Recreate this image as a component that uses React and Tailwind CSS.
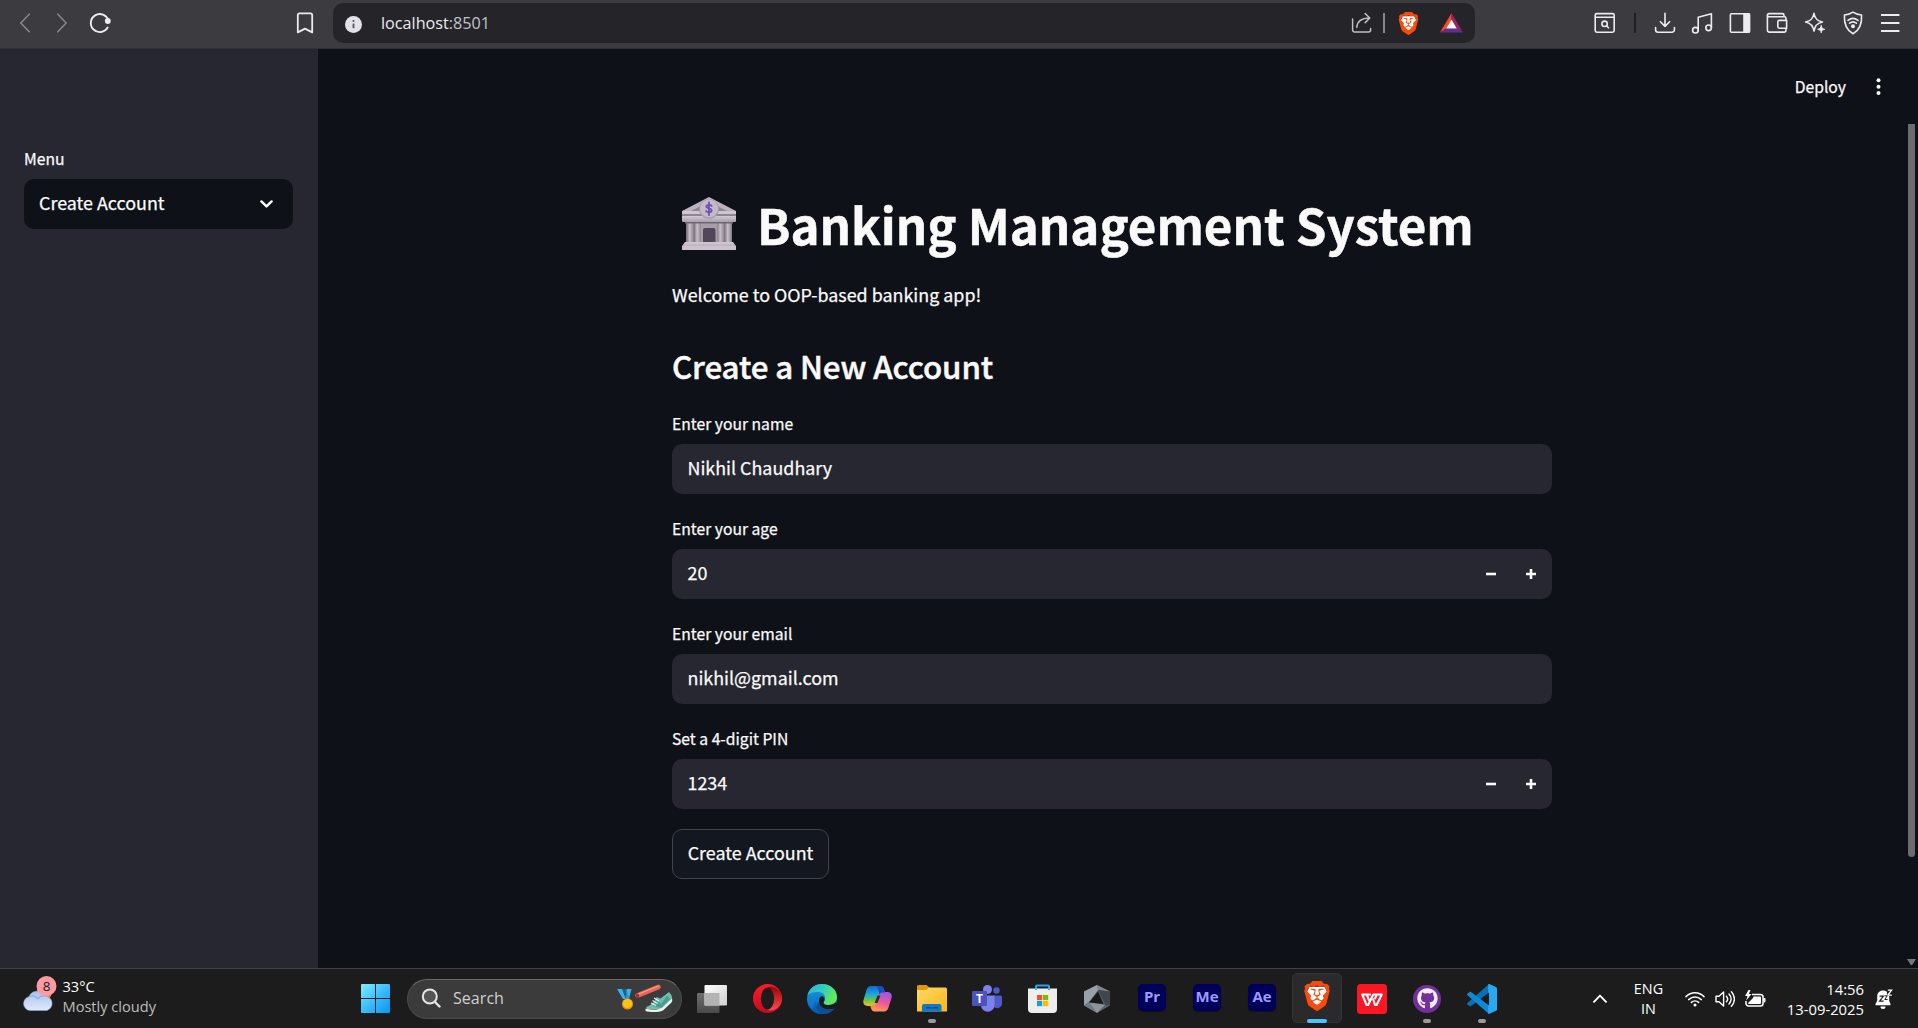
import React from "react";
import { SiBrave } from "react-icons/si";
import { FaGithub } from "react-icons/fa";

/* ---------- browser toolbar icons ---------- */

function Line({ size = 22, className = "", children, sw = 1.6 }) {
  return (
    <svg
      width={size}
      height={size}
      viewBox={`0 0 ${size} ${size}`}
      fill="none"
      stroke="currentColor"
      strokeWidth={sw}
      strokeLinecap="round"
      strokeLinejoin="round"
      className={`shrink-0 ${className}`}
    >
      {children}
    </svg>
  );
}

const Back = () => (
  <Line><path d="M15.2 2.2 6.8 11l8.4 8.8" /></Line>
);
const Forward = () => (
  <Line><path d="M6.8 2.2 15.2 11l-8.4 8.8" /></Line>
);
const Reload = () => (
  <Line sw={1.9}>
    <path d="M19.4 8.4A9 9 0 1 0 18.6 15.6" />
    <circle cx="18.8" cy="9" r="2" fill="currentColor" />
  </Line>
);
const Bookmark = () => (
  <Line sw={1.8}><path d="M3.8 20.4V3.2a1.8 1.8 0 0 1 1.8-1.8h10.8a1.8 1.8 0 0 1 1.8 1.8v17.2L11 16.6z" /></Line>
);
const Share = () => (
  <Line sw={1.5} className="text-[#bdbdc2]">
    <path d="M1.6 7v11a2 2 0 0 0 2 2h14a2 2 0 0 0 2-2v-1.4" />
    <path d="M5.8 15.4C6.2 9.6 9.6 6 18.6 6M14.2 1.6 18.8 6l-4.6 4.6" />
  </Line>
);
const Find = () => (
  <Line>
    <rect x="1.2" y="1.6" width="19" height="18.6" rx="1.6" />
    <path d="M1.4 5.2h18.6" />
    <circle cx="10.6" cy="11.8" r="2.7" />
    <path d="m12.6 13.8 1.8 2" />
  </Line>
);
const Download = () => (
  <Line>
    <path d="M11 1.4v12.8M6.4 9.8l4.6 4.6 4.6-4.6" />
    <path d="M1.6 15.6v2.2a2.4 2.4 0 0 0 2.4 2.4h14a2.4 2.4 0 0 0 2.4-2.4v-2.2" />
  </Line>
);
const Music = () => (
  <Line>
    <path d="M7.2 18.4V5.2L20.4 1.8v14" />
    <circle cx="4.4" cy="18.2" r="2.8" />
    <circle cx="17.6" cy="15.8" r="2.8" />
  </Line>
);
const Panel = () => (
  <Line>
    <rect x="1.4" y="1.8" width="19" height="18.4" rx="1" />
    <path d="M15 2h5.4v18H15z" fill="currentColor" />
  </Line>
);
const Wallet = () => (
  <Line>
    <path d="M20 8.2V6.4a1.6 1.6 0 0 0-1.6-1.6H3A1.6 1.6 0 0 1 1.4 3.2M1.4 3.2v14.9a2 2 0 0 0 2 2h15a1.6 1.6 0 0 0 1.6-1.6v-1.9M1.4 3.2a1.6 1.6 0 0 1 1.6-1.6h13.4a1.6 1.6 0 0 1 1.6 1.6v1.6" />
    <path d="M20.6 8.4h-7.2a1.6 1.6 0 0 0-1.6 1.6v4.6a1.6 1.6 0 0 0 1.6 1.6h7.2z" />
  </Line>
);
const Sparkle = () => (
  <Line>
    <path d="M10 1.4c.9 5.2 3 7.4 8.4 8.6-5.4 1.2-7.5 3.6-8.4 9-.9-5.4-3-7.8-8.4-9C7 8.8 9.1 6.6 10 1.4z" />
    <path d="M12.8 13h8v8h-8z" fill="#3c3b3f" stroke="none" />
    <path d="M17.2 13.600c.5 2.400 1.200 3.200 3.600 3.700-2.400.5-3.100 1.200-3.600 3.600-.5-2.400-1.200-3.100-3.600-3.600 2.400-.5 3.100-1.300 3.600-3.700z" fill="currentColor" strokeWidth="0.800" />
  </Line>
);
const Vpn = () => (
  <Line size={24}>
    <path d="M12 1.2c2.800 2 5.400 2.600 8.600 2.800.4 8.400-1.200 14.800-8.600 18.800C4.600 18.800 3 12.400 3.400 4c3.200-.2 5.800-.8 8.600-2.800z" />
    <path d="M7 9.400c3-2.400 7-2.400 10 0M8.600 12.200c2-1.600 4.800-1.600 6.800 0" />
    <circle cx="12" cy="15.2" r="1.200" fill="currentColor" />
  </Line>
);
const Burger = () => (
  <Line sw={1.9}><path d="M2 3h18.400M2 11h18.400M2 19h18.400" strokeLinecap="butt" /></Line>
);

function BraveLogo({ size, className = "" }) {
  return (
    <span className={`relative inline-flex shrink-0 ${className}`}>
      <svg width={size} height={size} viewBox="0 0 24 24" className="absolute inset-0">
        <path d="M6 4.500h12l2 4-2 7.500-6 5-6-5-2-7.500z" fill="#fff" />
      </svg>
      <SiBrave size={size} color="#fb4a0b" className="relative" />
    </span>
  );
}

const Bat = () => (
  <svg width="23" height="20" viewBox="0 0 23 20" className="ml-5 shrink-0">
    <path d="M11.500 0v7L6.500 15.500 0 19.500z" fill="#ff4724" />
    <path d="M11.500 0v7l5 8.500 6.500 4z" fill="#9e1f63" />
    <path d="M0 19.500l6.500-4h10l6.500 4z" fill="#662d91" />
    <path d="M11.500 6.600l5.300 9H6.200z" fill="#fff" />
  </svg>
);

function Cell({ children }) {
  return <div className="flex w-[37.6px] shrink-0 items-center justify-center">{children}</div>;
}

function Toolbar() {
  return (
    <header className="flex h-[49px] shrink-0 border-b border-[#313135] bg-[#3c3b3f] pt-[3px] text-[#ececf0]">
      <div className="flex h-10 w-[333px] shrink-0 items-center pl-1.5">
        <div className="flex text-[#87868b]">
          <Cell><Back /></Cell>
          <Cell><Forward /></Cell>
        </div>
        <Cell><Reload /></Cell>
        <div className="mr-[17.5px] ml-auto"><Bookmark /></div>
      </div>
      <div className="flex h-10 w-[1142px] shrink-0 items-center rounded-[10px] bg-[#252429] pr-[12.5px] pl-3">
        <svg width="17" height="17" viewBox="0 0 17 17" className="mt-0.5">
          <circle cx="8.5" cy="8.5" r="8.5" fill="#e3e2e8" />
          <path d="M8.500 7.600v4.600" stroke="#55545a" strokeWidth="1.8" />
          <circle cx="8.5" cy="5" r="1.1" fill="#55545a" />
        </svg>
        <div className="ml-[19px] font-['Open_Sans',sans-serif] text-[16.2px] leading-10 text-[#ebebef]">
          localhost<span className="text-[#c3c3c8]">:8501</span>
        </div>
        <div className="ml-auto flex items-center">
          <Share />
          <div className="ml-2.5 h-5 w-[1.5px] bg-[#88878c]" />
          <BraveLogo size={23} className="ml-3" />
          <Bat />
        </div>
      </div>
      <div className="flex h-10 flex-1 items-center justify-end pr-[9px]">
        <Find />
        <div className="mr-2.5 ml-[18px] h-5 w-0.5 bg-[#1f1e22]" />
        <Cell><Download /></Cell>
        <Cell><Music /></Cell>
        <Cell><Panel /></Cell>
        <Cell><Wallet /></Cell>
        <Cell><Sparkle /></Cell>
        <Cell><Vpn /></Cell>
        <Cell><Burger /></Cell>
      </div>
    </header>
  );
}

/* ---------- app ---------- */

function Sidebar() {
  return (
    <aside className="w-[318px] shrink-0 bg-[#262730] px-6 pt-[97px]">
      <div className="text-[15.7px] leading-[26px]">Menu</div>
      <div className="mt-[7px] flex h-[50px] w-[269px] items-center justify-between rounded-[10px] bg-[#0e1117] pr-5 pl-[15px]">
        <span className="pb-1 text-[17.9px]">Create Account</span>
        <svg width="13" height="8" viewBox="0 0 13 8" fill="none" stroke="#fafafa" strokeWidth="2.4" strokeLinecap="round" strokeLinejoin="round">
          <path d="M1.400 1.400l5.100 5 5.100-5" />
        </svg>
      </div>
    </aside>
  );
}

function BankIcon() {
  return (
    <svg width="54" height="54" viewBox="0 0 54 54" className="mr-[21px] ml-2.5 shrink-0">
      <defs>
        <linearGradient id="col" x1="0" x2="1">
          <stop offset="0" stopColor="#857d88" />
          <stop offset=".4" stopColor="#c9bfcb" />
          <stop offset="1" stopColor="#8f8793" />
        </linearGradient>
        <linearGradient id="slab" x1="0" x2="0" y1="0" y2="1">
          <stop offset="0" stopColor="#d3cad6" />
          <stop offset="1" stopColor="#a89eac" />
        </linearGradient>
      </defs>
      <rect x="4" y="25" width="46" height="20" fill="#7e7681" />
      <rect x="14" y="25" width="26" height="20" fill="#a79eaa" />
      <rect x="5" y="25" width="6.5" height="20" fill="url(#col)" />
      <rect x="12.5" y="25" width="6.5" height="20" fill="url(#col)" />
      <rect x="35.5" y="25" width="6.5" height="20" fill="url(#col)" />
      <rect x="43" y="25" width="6.5" height="20" fill="url(#col)" />
      <path d="M21 45V33a2 2 0 0 1 2-2h8.500a2 2 0 0 1 2 2v12z" fill="#51475b" />
      <path d="M27 0 54 14v8H0v-8z" fill="#bdb3c0" />
      <path d="M27 5 45 14H9z" fill="#8d8492" />
      <rect y="14" width="54" height="3" fill="#cfc6d2" />
      <rect y="17" width="54" height="2" fill="#8e8593" />
      <rect y="19" width="54" height="6" rx="1" fill="url(#slab)" />
      <rect x="3" y="25" width="48" height="1.5" fill="#6f6773" />
      <path d="M3 45h48l3 4v4H0v-4z" fill="url(#slab)" />
      <rect y="49" width="54" height="4" rx="1" fill="#cbc2ce" />
      <circle cx="27" cy="12" r="10" fill="#a79dac" />
      <circle cx="27" cy="11.5" r="9" fill="#c4bac9" />
      <path d="M29.600 8.800c-.6-1.200-5.200-1.500-5.200.7 0 2.500 5.200 1.300 5.200 3.900 0 2.300-4.700 2.100-5.400.7M27 5.500v12.500" fill="none" stroke="#7350b8" strokeWidth="1.9" strokeLinecap="round" />
    </svg>
  );
}

function Field({ label, value, stepper, first }) {
  return (
    <div className={first ? "mt-6" : "mt-[22px]"}>
      <div className="text-[15.7px] leading-[26px]">{label}</div>
      <div className="mt-[7px] flex h-[50px] items-center justify-between rounded-[10px] bg-[#262730] pr-4 pl-[15.5px]">
        <span className="pb-1 text-[17.9px]">{value}</span>
        {stepper && (
          <span className="flex gap-[30px]">
            <svg width="10" height="10" viewBox="0 0 10 10"><path d="M0 5h10" stroke="#fafafa" strokeWidth="2.6" /></svg>
            <svg width="10" height="10" viewBox="0 0 10 10"><path d="M0 5h10M5 0v10" stroke="#fafafa" strokeWidth="2.6" /></svg>
          </span>
        )}
      </div>
    </div>
  );
}

function Main() {
  return (
    <main className="relative flex-1">
      <div className="absolute top-[22px] right-[35px] flex items-center gap-[28px]">
        <span className="text-[15.7px] leading-8">Deploy</span>
        <svg width="9" height="18" viewBox="0 0 9 18" fill="#fafafa">
          <circle cx="4.5" cy="2.3" r="2" />
          <circle cx="4.5" cy="8.7" r="2" />
          <circle cx="4.5" cy="15.1" r="2" />
        </svg>
      </div>
      <div className="ml-[354px] w-[880px] pt-[141px]">
        <h1 className="flex h-[67px] items-center text-[49.2px] leading-[67px] font-bold whitespace-nowrap [-webkit-text-stroke:0.5px_#fafafa]">
          <BankIcon />
          Banking Management System
        </h1>
        <p className="mt-[21px] text-[17.9px] leading-8">Welcome to OOP-based banking app!</p>
        <h2 className="mt-[35px] text-[31.3px] leading-[42px] font-medium tracking-[-0.12px] [-webkit-text-stroke:0.5px_#fafafa]">
          Create a New Account
        </h2>
        <Field label="Enter your name" value="Nikhil Chaudhary" first />
        <Field label="Enter your age" value="20" stepper />
        <Field label="Enter your email" value="nikhil@gmail.com" />
        <Field label="Set a 4-digit PIN" value="1234" stepper />
        <button className="mt-5 flex h-[50px] w-[157px] items-center justify-center rounded-[10px] border border-[#41444c] bg-[#131720] pb-1 text-[17.9px] [-webkit-text-stroke:0.25px_#fafafa]">
          Create Account
        </button>
      </div>
      <div className="absolute top-[75px] right-[3px] h-[733px] w-[7px] rounded-b-full bg-[#6b6b70]" />
      <svg width="9" height="6" viewBox="0 0 9 6" className="absolute right-0.5 bottom-[3px]">
        <path d="M0 0h9L5.200 6H3.800z" fill="#77777b" />
      </svg>
    </main>
  );
}

/* ---------- taskbar ---------- */

function Weather() {
  return (
    <div className="flex w-[361px] shrink-0 pt-[7px] pl-[23px] text-[14.6px] leading-5">
      <svg width="34" height="37" viewBox="0 0 34 37" className="mt-[-1px]">
        <defs>
          <linearGradient id="cloud" x1="0" x2="0" y1="0" y2="1">
            <stop offset="0" stopColor="#a9c1ee" />
            <stop offset="1" stopColor="#dfe9fb" />
          </linearGradient>
        </defs>
        <circle cx="21" cy="18" r="7.5" fill="#f08a1c" />
        <path d="M7 35.500a7 7 0 0 1-1-13.800 8.500 8.500 0 0 1 15.500-.8 7.500 7.500 0 0 1 2.500 14.600z" fill="url(#cloud)" stroke="#88a8e8" strokeWidth=".6" />
        <path d="M6 22c3-2 7-1 9 2 1.500-2.500 4-3.500 7-3" fill="none" stroke="#8fafea" strokeWidth="1.2" />
        <circle cx="23.5" cy="11" r="10" fill="#ff99a4" />
        <text x="23.5" y="16" textAnchor="middle" fontSize="13.5" fontFamily="Open Sans" fill="#1b1b1b">8</text>
      </svg>
      <div className="ml-[5.5px]">
        <div className="text-white">33°C</div>
        <div className="text-[#bdbdbd]">Mostly cloudy</div>
      </div>
    </div>
  );
}

const WindowsLogo = () => (
  <svg width="29" height="29" viewBox="0 0 29 29" className="shrink-0">
    <defs>
      <linearGradient id="win" x1="0" y1="0" x2="29" y2="29" gradientUnits="userSpaceOnUse">
        <stop offset="0" stopColor="#7df0ff" />
        <stop offset=".5" stopColor="#3cbcfb" />
        <stop offset="1" stopColor="#0a95f5" />
      </linearGradient>
    </defs>
    <path d="M1 0h13v14H0V1a1 1 0 0 1 1-1zM15 0h13a1 1 0 0 1 1 1v13H15zM0 15h14v14H1a1 1 0 0 1-1-1zM15 15h14v13a1 1 0 0 1-1 1H15z" fill="url(#win)" />
  </svg>
);

function SearchBox() {
  return (
    <div className="ml-[17px] flex h-10 w-[275px] shrink-0 items-center rounded-full border border-[#4b4b4b] border-t-[#6a6a6a] bg-[#3b3b3b] pr-2 pl-[13px]">
      <svg width="20" height="20" viewBox="0 0 20 20" fill="none" strokeLinecap="round" className="mt-[-1px]">
        <circle cx="8.8" cy="8.5" r="7" stroke="#e6e6e6" strokeWidth="2" fill="#555" />
        <path d="M14 14l4.500 4.500" stroke="#e6e6e6" strokeWidth="2.4" />
      </svg>
      <span className="ml-3 text-[16.1px] text-[#cfcfcf]">Search</span>
      <svg width="56" height="30" viewBox="0 0 56 30" className="ml-auto">
        <path d="M0 5h5l4 10H6zM9.500 5H14.500L12 15H9z" fill="#36b4ee" />
        <path d="M5 5l5 11 2.500-2L9 5z" fill="#1284cc" opacity=".5" />
        <circle cx="10.5" cy="20" r="5.6" fill="#e89000" />
        <circle cx="10.5" cy="19.5" r="4.6" fill="#ffc21a" />
        <path d="M20.500 11.500 41.500 3" stroke="#e9665a" strokeWidth="4.6" strokeLinecap="round" />
        <path d="M20.500 10.500 41.500 2" stroke="#ff9a86" strokeWidth="1.3" />
        <ellipse cx="20.5" cy="12" rx="1.7" ry="2.5" fill="#a92e33" />
        <path d="M29 23c6-2 9-6 10.500-10l4 1.500L52 8c3 3 4 6 2.500 9L46 25H30z" fill="#6dbdab" />
        <path d="M39 16l5 4 6-8 3 3-9 9-8-2z" fill="#4a9b91" />
        <path d="M37 14l5 3M35.500 16.500l5 3M34 19l5 2.500" stroke="#e9f7f3" strokeWidth="1.2" />
        <path d="M28.500 24.500c8 2 14 .8 17-1L55 14.500c.5 2 .3 3-.5 4L46 26.500c-4 2-13 2-17.500.5z" fill="#f0eee8" />
      </svg>
    </div>
  );
}

const TaskView = () => (
  <svg width="30" height="28" viewBox="0 0 30 28">
    <defs>
      <linearGradient id="tv" x1="0" y1="0" x2="1" y2="1"><stop offset="0" stopColor="#fff" /><stop offset="1" stopColor="#d0d0d0" /></linearGradient>
      <linearGradient id="tv2" x1="0" y1="0" x2="0" y2="1"><stop offset="0" stopColor="#6f6f6f" /><stop offset="1" stopColor="#4a4a4a" /></linearGradient>
    </defs>
    <rect y="8" width="22.5" height="20" rx="1" fill="url(#tv2)" />
    <rect x="7.5" width="22.5" height="20.5" rx="1" fill="url(#tv)" />
    <path d="M7.500 8h15v12.500h-15z" fill="#b3b3b3" />
  </svg>
);

const Opera = () => (
  <svg width="29" height="29" viewBox="0 0 29 29">
    <defs>
      <linearGradient id="op" x1="0" y1="0" x2="0" y2="1"><stop offset="0" stopColor="#ff1b2d" /><stop offset="1" stopColor="#c20a1e" /></linearGradient>
      <linearGradient id="op2" x1="0" y1="0" x2="0" y2="1"><stop offset="0" stopColor="#9c0008" /><stop offset="1" stopColor="#ff4b4b" /></linearGradient>
    </defs>
    <circle cx="14.5" cy="14.5" r="14.5" fill="url(#op)" />
    <path d="M14.500 3.500c3-3 14.500 1 14.500 11s-11.500 14-14.500 11c8-3 8-19 0-22z" fill="url(#op2)" />
    <ellipse cx="14.5" cy="14.5" rx="6.6" ry="11" fill="#1c1c1c" />
  </svg>
);

const Edge = () => (
  <svg width="30" height="30" viewBox="0 0 30 30">
    <defs>
      <linearGradient id="e1" x1="0" y1="0" x2="1" y2=".4"><stop offset="0" stopColor="#25b5ea" /><stop offset=".55" stopColor="#36cdb8" /><stop offset="1" stopColor="#62ea57" /></linearGradient>
      <linearGradient id="e2" x1="0" y1="0" x2="0" y2="1"><stop offset="0" stopColor="#1899e0" /><stop offset="1" stopColor="#0b66c0" /></linearGradient>
    </defs>
    <circle cx="15" cy="15" r="15" fill="url(#e2)" />
    <path d="M.3 12C2 4 8 0 15 0c9 0 15 6 15 13 0 5-4 8-8.500 8-4 0-6-1.500-4.500-3.500 3-4.500-.5-9.500-6-9.500C6 8 2 9 .3 12z" fill="url(#e1)" />
    <path d="M11 12c-3 3-3 11 3 14.500 5 3 11 .5 13.500-3.500C23 32 8 33 3 24c4 4 6-9 8-12z" fill="#0a59a8" opacity=".7" />
    <path d="M17 17.500c-1.500 2 .5 3.500 4.500 3.500 3 0 6-1 7.500-3l1 1c-.5 3-2 5-2.600 5.500-6.400 2.500-14.400.5-15.400-6.500-.4-3 1-5.500 3-6 2.500.8 3.300 3.500 2 5.500z" fill="#1c1c1c" />
    <path d="M12 18c1 7 9 9 15.400 6.500-2 3.500-7 6-12 5.500C9 28.500 8.500 20 12 18z" fill="#0d4f94" />
  </svg>
);

const Copilot = () => (
  <svg width="29" height="26" viewBox="0 0 29 26">
    <defs>
      <linearGradient id="c1" x1="0" y1="0" x2="0" y2="1"><stop offset="0" stopColor="#1464d8" /><stop offset=".4" stopColor="#18a7dc" /><stop offset=".7" stopColor="#6cc04a" /><stop offset="1" stopColor="#f5c518" /></linearGradient>
      <linearGradient id="c2" x1=".6" y1="0" x2=".3" y2="1"><stop offset="0" stopColor="#a055e8" /><stop offset=".5" stopColor="#f0559a" /><stop offset="1" stopColor="#ffa04d" /></linearGradient>
    </defs>
    <path d="M8 0h9c2.500 0 3.500 1.500 4.200 4l.8 2.500h-2.500c-2 0-3 1-3.700 3.500l-2.300 7.500c-.6 2-1.600 2.500-3.500 2.500H4.500C1 20-.3 17.500.5 14L3.500 4C4.300 1.300 5.800 0 8 0z" fill="url(#c1)" />
    <path d="M21 25.500h-9c-2.500 0-3.500-1.500-4.200-4L7 19.500h3c2 0 3-1 3.700-3.500L16 8.500C16.600 6.500 17.600 6 19.500 6h5c3.500 0 4.800 2.500 4 6l-3 9.500c-.8 2.700-2.300 4-4.500 4z" fill="url(#c2)" />
    <path d="M13 0h4c2.500 0 3.500 1.500 4.200 4l.8 2.500h-2.500c-1.500 0-2.500.5-3.200 2C16 6 15.500 1.500 13 0z" fill="#1d4cc0" />
    <path d="M14.500 9.500h3l-3 7.500h-3z" fill="#1c1c1c" opacity=".85" />
  </svg>
);

const Folder = () => (
  <svg width="30" height="27" viewBox="0 0 30 27">
    <defs><linearGradient id="fo" x1="0" y1="0" x2="1" y2="1"><stop offset="0" stopColor="#ffd869" /><stop offset="1" stopColor="#fbb813" /></linearGradient></defs>
    <path d="M0 1.500A1.500 1.500 0 0 1 1.500 0h8L13 3v5H0z" fill="#e09b00" />
    <path d="M0 5h9l3-2.500h16.500A1.500 1.500 0 0 1 30 4v22.500H0z" fill="url(#fo)" />
    <path d="M5 26.500V21a2 2 0 0 1 2-2h15.500a2 2 0 0 1 2 2v5.500z" fill="#0f78cc" />
    <path d="M9 22.800h12" stroke="#0b4f94" strokeWidth="1.5" />
  </svg>
);

const Teams = () => (
  <svg width="30" height="27" viewBox="0 0 30 27">
    <circle cx="24.5" cy="5.5" r="3.2" fill="#5059c9" />
    <path d="M21 10.500h7.500A1.500 1.500 0 0 1 30 12v5a5 5 0 0 1-8.500 4.500z" fill="#5059c9" />
    <circle cx="15.5" cy="4.5" r="4.5" fill="#7b83eb" />
    <path d="M9 10.500h13.500v9.500a6.700 6.700 0 0 1-13.500 0z" fill="#7b83eb" />
    <rect y="6" width="15" height="15" rx="1.2" fill="#4b53bc" />
    <text x="7.5" y="17.8" textAnchor="middle" fontSize="12" fontWeight="700" fontFamily="Open Sans" fill="#fff">T</text>
  </svg>
);

const Store = () => (
  <svg width="29" height="29" viewBox="0 0 29 29">
    <path d="M8 7V2.500a1 1 0 0 1 1-1h11a1 1 0 0 1 1 1V7" fill="none" stroke="#23a6ec" strokeWidth="2" />
    <path d="M0 4.500h29V25a4 4 0 0 1-4 4H4a4 4 0 0 1-4-4z" fill="#eeeeee" />
    <path d="M8 6V4.500M21 6V4.500" stroke="#23a6ec" strokeWidth="2" />
    <path d="M9 11h5.200v5.200H9z" fill="#f25022" />
    <path d="M15 11h5.200v5.200H15z" fill="#7fba00" />
    <path d="M9 17h5.200v5.200H9z" fill="#00a4ef" />
    <path d="M15 17h5.200v5.200H15z" fill="#ffb900" />
  </svg>
);

const Cube = () => (
  <svg width="26" height="28" viewBox="0 0 26 28">
    <path d="M13 0 26 6.500v14L13 28 0 20.500v-14z" fill="#5a6065" />
    <path d="M13 0 26 6.500 14 5z" fill="#7f868b" />
    <path d="M13 0 0 6.500v14L5 17 14 5z" fill="#98a1a8" />
    <path d="M0 20.500 5 17l8 11z" fill="#737a80" />
    <path d="M5 17l16 3-8 8z" fill="#8d949a" />
    <path d="M14 5l7.500 15L26 20.500v-14z" fill="#41464a" />
    <path d="M14 6.500 19.500 19 5 17.500z" fill="#17191b" />
  </svg>
);

function Adobe({ name }) {
  return (
    <div className="mt-[-3px] flex h-[27px] w-7 items-center justify-center rounded-[5px] bg-[#00005b] pb-px text-[15px] leading-none font-bold text-[#9b9bff] shadow-[0_1px_1px_#111]">
      {name}
    </div>
  );
}

const Wps = () => (
  <svg width="30" height="30" viewBox="0 0 30 30">
    <rect width="30" height="30" rx="3.5" fill="#fb1625" />
    <g fill="none" stroke="#fff" strokeWidth="2.1" strokeLinejoin="round">
      <path d="M14 10.500H5.200L9.600 21h1.600l5-10.500" />
      <path d="M9.800 10.500l2.500 6.500" />
      <path d="M15.800 10.500H24.800L19.600 21H18l-2-6.500" />
      <path d="M17.800 15l2-4.500" />
    </g>
  </svg>
);

const GitHubDesktop = () => (
  <div className="flex size-7 items-center justify-center rounded-full bg-[#74309a]">
    <FaGithub size={21} color="#f4ecf8" />
  </div>
);

const VsCode = () => (
  <svg width="30" height="30" viewBox="0 0 30 30">
    <path d="M22 0 30 3.500 22 9.500 3.200 22.600.4 20.500a1 1 0 0 1 0-1.600z" fill="#0a6fb5" />
    <path d="M3.200 7.600.4 9.700a1 1 0 0 0 0 1.600L22 30l2-7.500z" fill="#0b8bd6" />
    <path d="M22 0l7 3.200a1.800 1.800 0 0 1 1 1.600v20.400a1.800 1.800 0 0 1-1 1.600L22 30c-.8 0-.9-1-.9-1.700V1.700C21.100 1 21.200 0 22 0z" fill="#27a8f3" />
    <path d="M22 8.500v13L13.500 15z" fill="#1c1c1c" />
  </svg>
);

function Task({ children, dot, active }) {
  return (
    <div className="relative flex h-[59px] w-[55px] shrink-0 items-center justify-center">
      {active && <div className="absolute top-1 left-[2.5px] size-[50px] rounded-[5px] border border-[#353535] bg-[#2a2a2a]" />}
      <div className="relative">{children}</div>
      {dot && <div className="absolute bottom-[5px] left-[23.5px] h-1 w-2 rounded-full bg-[#9a9a9a]" />}
      {active && <div className="absolute bottom-[5px] left-[17.5px] h-1 w-5 rounded-full bg-[#4cc2ff]" />}
    </div>
  );
}

function Tray() {
  return (
    <div className="ml-auto flex items-center pr-[25px] text-[14.8px] leading-5 text-white">
      <svg width="14" height="9" viewBox="0 0 14 9" fill="none" stroke="#fff" strokeWidth="1.9" strokeLinecap="round" strokeLinejoin="round">
        <path d="M1 7.800 7 1.600l6 6.200" />
      </svg>
      <div className="ml-[27px] w-[29px] text-center text-[14.4px]">
        <div className="-mx-1">ENG</div>
        <div>IN</div>
      </div>
      <svg width="20" height="16" viewBox="0 0 20 16" fill="none" stroke="#fff" strokeWidth="1.5" strokeLinecap="round" className="ml-[22px]">
        <path d="M1 5.600c5.200-5.200 12.800-5.200 18 0M3.700 8.600c3.700-3.600 8.900-3.600 12.600 0M6.400 11.400c2.100-2 5.100-2 7.200 0" />
        <circle cx="10" cy="14" r="1.5" fill="#fff" stroke="none" />
      </svg>
      <svg width="20" height="18" viewBox="0 0 20 18" fill="none" stroke="#fff" strokeWidth="1.4" strokeLinecap="round" strokeLinejoin="round" className="ml-2.5">
        <path d="M1 6.300h3L8.600 2v14L4 11.700H1z" />
        <path d="M11.400 6.200c1.500 1.600 1.500 4 0 5.600M14 4c2.800 2.900 2.800 7.100 0 10M16.400 1.800c4 4.200 4 10.200 0 14.400" />
      </svg>
      <svg width="21" height="18" viewBox="0 0 21 18" className="ml-2.5">
        <path d="M7 4.500h8.500a2.500 2.500 0 0 1 2.500 2.500v6.500a2.500 2.500 0 0 1-2.500 2.500h-12A2.500 2.500 0 0 1 1 13.500V11" fill="none" stroke="#fff" strokeWidth="1.5" />
        <path d="M8.500 6.500H15a1 1 0 0 1 1 1V13a1 1 0 0 1-1 1H4a1 1 0 0 1-1-1l5-5z" fill="#fff" />
        <path d="M18.500 8h1a1 1 0 0 1 1 1v2.500a1 1 0 0 1-1 1h-1z" fill="#fff" />
        <path d="M3.500 0 0 6h2.500L1.200 10.500 6.500 4H3.800L5.500 0z" fill="#fff" />
      </svg>
      <div className="ml-5 w-[78px] text-right whitespace-nowrap">
        <div>14:56</div>
        <div>13-09-2025</div>
      </div>
      <svg width="18" height="20" viewBox="0 0 18 20" className="ml-[11px]">
        <path d="M8 1.500C4.500 1.500 2.200 4 2.200 7v4.500L.5 15v1.200h15V15l-1.300-3.200V7c0-3-2.600-5.500-6.200-5.500z" fill="#fff" />
        <path d="M5.500 17.500h5a2.500 2.500 0 0 1-5 0z" fill="#fff" />
        <path d="M12 0h6v7h-6z" fill="#1c1c1c" />
        <path d="M4.600 7.200h3.800l-3.800 5h4" fill="none" stroke="#1c1c1c" strokeWidth="1.2" />
        <path d="M12.800 1.200h3.800l-3.800 5h4" fill="none" stroke="#fff" strokeWidth="1.3" />
        <path d="M9.600 6.800h2.600L9.800 10.500h2.800" fill="none" stroke="#1c1c1c" strokeWidth="1" />
      </svg>
    </div>
  );
}

function Taskbar() {
  return (
    <footer className="flex h-[60px] shrink-0 border-t border-[#414141] bg-[#1c1c1c] font-['Open_Sans',sans-serif]">
      <Weather />
      <div className="flex h-[59px] items-center">
        <WindowsLogo />
        <SearchBox />
      </div>
      <div className="ml-[2.5px] flex">
        <Task><TaskView /></Task>
        <Task><Opera /></Task>
        <Task><Edge /></Task>
        <Task><Copilot /></Task>
        <Task dot><Folder /></Task>
        <Task><Teams /></Task>
        <Task><Store /></Task>
        <Task><Cube /></Task>
        <Task><Adobe name="Pr" /></Task>
        <Task><Adobe name="Me" /></Task>
        <Task><Adobe name="Ae" /></Task>
        <Task active><BraveLogo size={30} /></Task>
        <Task><Wps /></Task>
        <Task dot><GitHubDesktop /></Task>
        <Task dot><VsCode /></Task>
      </div>
      <Tray />
    </footer>
  );
}

export default function App() {
  return (
    <div className="flex h-[1028px] w-[1918px] flex-col overflow-hidden bg-[#0e1117] font-['Noto_Sans_CJK_SC',sans-serif] text-[#fafafa]">
      <Toolbar />
      <div className="flex min-h-0 flex-1 [-webkit-text-stroke:0.25px_#fafafa]">
        <Sidebar />
        <Main />
      </div>
      <Taskbar />
    </div>
  );
}
